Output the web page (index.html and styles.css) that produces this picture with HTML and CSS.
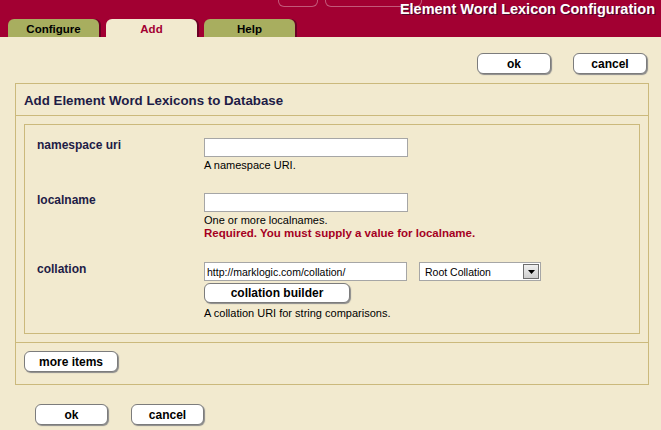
FILE: index.html
```html
<!DOCTYPE html>
<html>
<head>
<meta charset="utf-8">
<title>Element Word Lexicon Configuration</title>
<link rel="stylesheet" href="styles.css">
</head>
<body>
<header class="masthead">
  <div class="deco deco-a"></div>
  <div class="deco deco-b"></div>
  <h1 class="title">Element Word Lexicon Configuration</h1>
  <nav class="tabs">
    <a class="tab">Configure</a>
    <a class="tab tab-active">Add</a>
    <a class="tab">Help</a>
  </nav>
</header>

<div class="actions actions-top">
  <button class="btn btn-wide">ok</button>
  <button class="btn btn-wide">cancel</button>
</div>

<section class="panel">
  <h2 class="panel-head">Add Element Word Lexicons to Database</h2>
  <div class="panel-body">
    <div class="fields">
      <div class="row">
        <div class="label">namespace uri</div>
        <div class="field">
          <input class="text" type="text">
          <div class="hint">A namespace URI.</div>
        </div>
      </div>
      <div class="row">
        <div class="label">localname</div>
        <div class="field">
          <input class="text" type="text">
          <div class="hint">One or more localnames.</div>
          <div class="error">Required. You must supply a value for localname.</div>
        </div>
      </div>
      <div class="row row-last">
        <div class="label">collation</div>
        <div class="field">
          <div class="inline">
            <input class="text text-coll" type="text" value="http://marklogic.com/collation/">
            <div class="select"><span class="select-text">Root Collation</span><span class="select-btn"><svg width="7" height="4" viewBox="0 0 7 4"><path d="M0 0h7L3.5 4z" fill="#000"/></svg></span></div>
          </div>
          <button class="btn btn-builder">collation builder</button>
          <div class="hint hint-coll">A collation URI for string comparisons.</div>
        </div>
      </div>
    </div>
  </div>
  <div class="panel-foot">
    <button class="btn btn-more">more items</button>
  </div>
</section>

<div class="actions actions-bottom">
  <button class="btn btn-narrow">ok</button>
  <button class="btn btn-narrow">cancel</button>
</div>
</body>
</html>
```

FILE: styles.css
```css
html, body {
  margin: 0;
  padding: 0;
}
body {
  background: #f2eacf;
  font-family: "Liberation Sans", Arial, sans-serif;
  color: #000;
  width: 661px;
  height: 430px;
  overflow: hidden;
}

.masthead {
  position: relative;
  height: 37px;
  background: #a20032;
  display: flex;
  flex-direction: column;
  justify-content: space-between;
}
.deco {
  position: absolute;
  top: -6px;
  height: 12px;
  border: 1px solid rgba(255, 255, 255, 0.35);
  border-top: none;
  border-radius: 0 0 6px 6px;
}
.deco-a { left: 278px; width: 38px; }
.deco-b { left: 325px; width: 95px; }
.title {
  position: relative;
  margin: 0;
  text-align: right;
  padding: 1px 6px 0 0;
  font-size: 14.5px;
  line-height: 17px;
  font-weight: bold;
  color: #fff;
  text-shadow: 1px 1px 0 #4a0a2a;
}
.tabs {
  display: flex;
  gap: 7px;
  padding-left: 8px;
  height: 18px;
}
.tab {
  width: 91px;
  height: 18px;
  box-sizing: border-box;
  padding-top: 3px;
  text-align: center;
  background: #a8ae5f;
  border-radius: 6px 6px 0 0;
  box-shadow: 2px 0 0 #6a0024;
  font-size: 11.5px;
  line-height: 14px;
  font-weight: bold;
  color: #000;
}
.tab-active {
  background: #f2eacf;
  color: #a20032;
}

.actions {
  display: flex;
}
.actions-top {
  justify-content: flex-end;
  gap: 22px;
  padding: 16px 14px 0 0;
}
.actions-bottom {
  gap: 23px;
  padding: 19px 0 0 35px;
}

.btn {
  height: 21px;
  box-sizing: border-box;
  background: #fff;
  border: 1px solid #7c7c7c;
  border-radius: 6px;
  box-shadow: 1px 1px 1px #8a8a8a;
  font-family: "Liberation Sans", Arial, sans-serif;
  font-size: 12px;
  font-weight: bold;
  color: #000;
  padding: 0;
  line-height: 18px;
}
.btn-wide { width: 74px; }
.btn-narrow { width: 73px; }
.btn-more { width: 94px; }
.btn-builder {
  display: block;
  width: 146px;
  height: 20px;
  margin-top: 2px;
  font-size: 12px;
}

.panel {
  margin: 9px 0 0 15px;
  width: 634px;
  box-sizing: border-box;
  border: 1px solid #cbb97c;
}
.panel-head {
  margin: 0;
  height: 32px;
  box-sizing: border-box;
  padding: 9px 0 0 8px;
  border-bottom: 1px solid #cbb97c;
  font-size: 13.3px;
  line-height: 16px;
  font-weight: bold;
  color: #1e1c46;
}
.panel-body {
  padding: 8px;
  border-bottom: 1px solid #cbb97c;
}
.fields {
  border: 1px solid #cbb97c;
  padding: 13px 0 13px 12px;
  display: flex;
  flex-direction: column;
  gap: 21px;
}
.row {
  display: grid;
  grid-template-columns: 167px auto;
}
.row-last {
  margin-top: 1px;
}
.label {
  font-size: 12px;
  line-height: 14px;
  font-weight: bold;
  color: #1e1c46;
}
.field {
  display: flex;
  flex-direction: column;
  align-items: flex-start;
}
.text {
  width: 204px;
  height: 19px;
  box-sizing: border-box;
  margin: 0;
  border: 1px solid #a6a6a6;
  background: #fff;
  padding: 0 2px;
  font-family: "Liberation Sans", Arial, sans-serif;
  font-size: 10.5px;
  color: #000;
}
.text-coll { width: 203px; }
.inline {
  display: flex;
  gap: 12px;
}
.select {
  width: 122px;
  height: 19px;
  box-sizing: border-box;
  border: 1px solid #a6a6a6;
  background: #fff;
  display: flex;
  align-items: center;
  justify-content: space-between;
  padding: 0 1px 0 5px;
}
.select-text {
  font-size: 10.5px;
  color: #000;
}
.select-btn {
  width: 16px;
  height: 15px;
  box-sizing: border-box;
  border: 1px solid #6e6e6e;
  background: linear-gradient(#f0f0f0, #cfcfcf);
  display: flex;
  align-items: center;
  justify-content: center;
  padding-top: 1px;
}
.hint {
  margin-top: 2px;
  font-size: 11px;
  line-height: 13px;
  color: #000;
}
.hint-coll { margin-top: 4px; }
.error {
  font-size: 11.5px;
  line-height: 13px;
  font-weight: bold;
  color: #a5001f;
}
.panel-foot {
  padding: 8px 8px 12px 8px;
}
.btn-more {
  display: block;
}
```
